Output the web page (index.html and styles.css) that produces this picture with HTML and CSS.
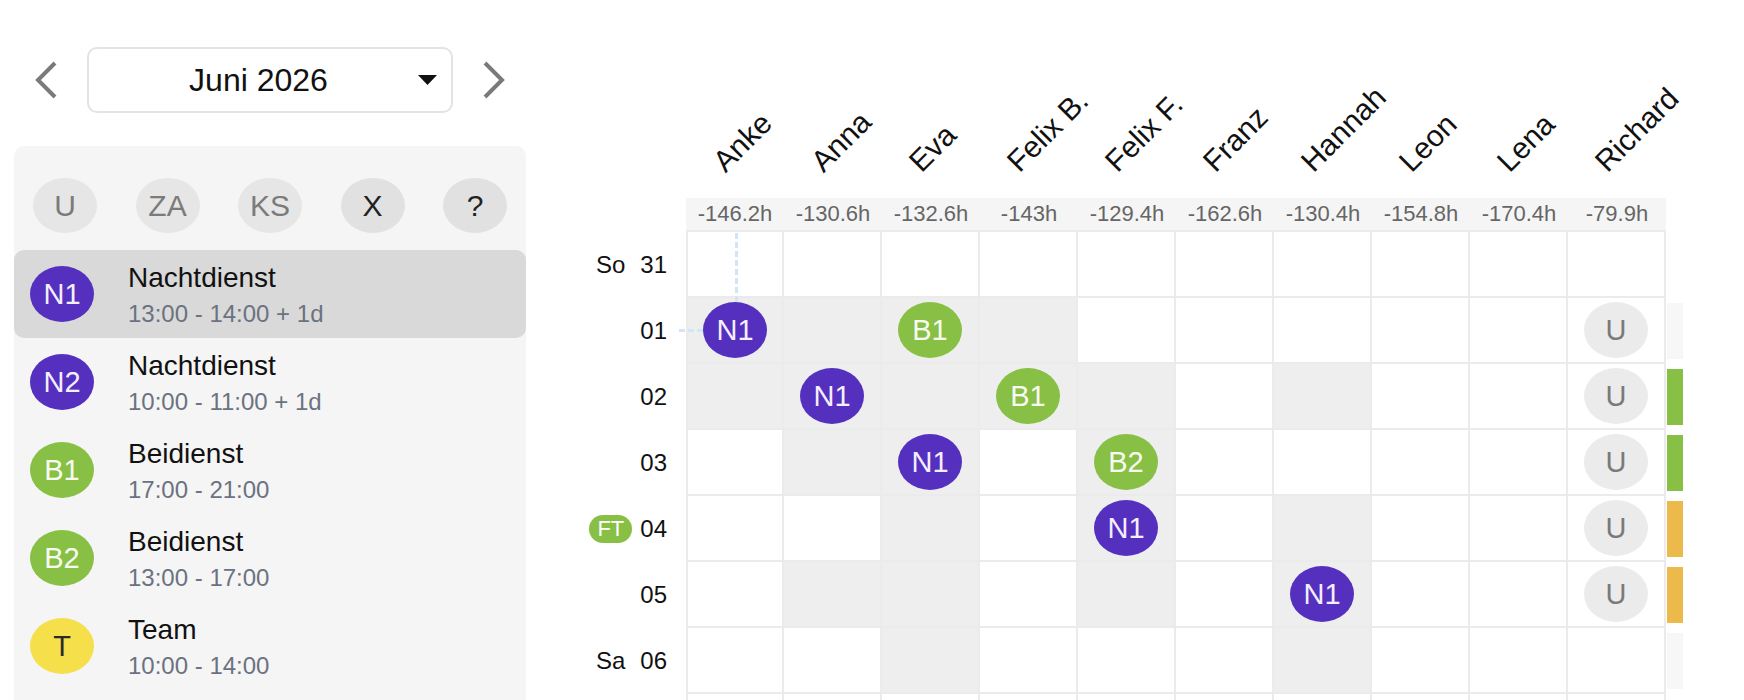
FILE: index.html
```html
<!DOCTYPE html>
<html>
<head>
    <meta charset="utf-8">
    <title>Dienstplan Juni 2026</title>
    <link rel="stylesheet" href="styles.css">
</head>
<body>
<div class="app">

<!-- left column: month switch and shift palette -->
<div class="sidebar">
    <div class="month-nav">
        <span class="nav-arrow"><svg width="22" height="38" viewBox="0 0 22 38"><path d="M20 2 L3 19 L20 36"/></svg></span>
        <div class="month-select">
            <span class="month-label">Juni 2026</span>
            <svg class="caret" width="19" height="10" viewBox="0 0 19 10"><path d="M0 0 H19 L9.5 10 Z"/></svg>
        </div>
        <span class="nav-arrow"><svg width="22" height="38" viewBox="0 0 22 38"><path d="M2 2 L19 19 L2 36"/></svg></span>
    </div>

    <div class="panel">
        <div class="filters">
            <span class="filter">U</span>
            <span class="filter">ZA</span>
            <span class="filter">KS</span>
            <span class="filter on">X</span>
            <span class="filter on">?</span>
        </div>

        <div class="shift selected">
            <span class="badge n">N1</span>
            <div class="shift-text">
                <div class="shift-name">Nachtdienst</div>
                <div class="shift-time">13:00 - 14:00 + 1d</div>
            </div>
        </div>
        <div class="shift">
            <span class="badge n">N2</span>
            <div class="shift-text">
                <div class="shift-name">Nachtdienst</div>
                <div class="shift-time">10:00 - 11:00 + 1d</div>
            </div>
        </div>
        <div class="shift">
            <span class="badge b">B1</span>
            <div class="shift-text">
                <div class="shift-name">Beidienst</div>
                <div class="shift-time">17:00 - 21:00</div>
            </div>
        </div>
        <div class="shift">
            <span class="badge b">B2</span>
            <div class="shift-text">
                <div class="shift-name">Beidienst</div>
                <div class="shift-time">13:00 - 17:00</div>
            </div>
        </div>
        <div class="shift">
            <span class="badge t">T</span>
            <div class="shift-text">
                <div class="shift-name">Team</div>
                <div class="shift-time">10:00 - 14:00</div>
            </div>
        </div>
    </div>
</div>

<!-- right column: the plan itself -->
<div class="plan">
    <div class="names">
        <div class="name"><span>Anke</span></div>
        <div class="name"><span>Anna</span></div>
        <div class="name"><span>Eva</span></div>
        <div class="name"><span>Felix B.</span></div>
        <div class="name"><span>Felix F.</span></div>
        <div class="name"><span>Franz</span></div>
        <div class="name"><span>Hannah</span></div>
        <div class="name"><span>Leon</span></div>
        <div class="name"><span>Lena</span></div>
        <div class="name"><span>Richard</span></div>
    </div>

    <div class="hours">
        <div>-146.2h</div>
        <div>-130.6h</div>
        <div>-132.6h</div>
        <div>-143h</div>
        <div>-129.4h</div>
        <div>-162.6h</div>
        <div>-130.4h</div>
        <div>-154.8h</div>
        <div>-170.4h</div>
        <div>-79.9h</div>
    </div>

    <div class="day">
        <div class="date"><span class="wd">So</span>31</div>
        <div class="cell"></div>
        <div class="cell"></div>
        <div class="cell"></div>
        <div class="cell"></div>
        <div class="cell"></div>
        <div class="cell"></div>
        <div class="cell"></div>
        <div class="cell"></div>
        <div class="cell"></div>
        <div class="cell"></div>
        <div class="mark"></div>
    </div>

    <div class="day">
        <div class="date">01</div>
        <div class="cell off"><span class="badge n hl">N1</span></div>
        <div class="cell off"></div>
        <div class="cell off"><span class="badge b">B1</span></div>
        <div class="cell off"></div>
        <div class="cell"></div>
        <div class="cell"></div>
        <div class="cell"></div>
        <div class="cell"></div>
        <div class="cell"></div>
        <div class="cell"><span class="badge u">U</span></div>
        <div class="mark light"></div>
    </div>

    <div class="day">
        <div class="date">02</div>
        <div class="cell off"></div>
        <div class="cell off"><span class="badge n">N1</span></div>
        <div class="cell off"></div>
        <div class="cell off"><span class="badge b">B1</span></div>
        <div class="cell off"></div>
        <div class="cell"></div>
        <div class="cell off"></div>
        <div class="cell"></div>
        <div class="cell"></div>
        <div class="cell"><span class="badge u">U</span></div>
        <div class="mark green"></div>
    </div>

    <div class="day">
        <div class="date">03</div>
        <div class="cell"></div>
        <div class="cell off"></div>
        <div class="cell off"><span class="badge n">N1</span></div>
        <div class="cell"></div>
        <div class="cell off"><span class="badge b">B2</span></div>
        <div class="cell"></div>
        <div class="cell"></div>
        <div class="cell"></div>
        <div class="cell"></div>
        <div class="cell"><span class="badge u">U</span></div>
        <div class="mark green"></div>
    </div>

    <div class="day">
        <div class="date"><span class="ft">FT</span>04</div>
        <div class="cell"></div>
        <div class="cell"></div>
        <div class="cell off"></div>
        <div class="cell"></div>
        <div class="cell off"><span class="badge n">N1</span></div>
        <div class="cell"></div>
        <div class="cell off"></div>
        <div class="cell"></div>
        <div class="cell"></div>
        <div class="cell"><span class="badge u">U</span></div>
        <div class="mark orange"></div>
    </div>

    <div class="day">
        <div class="date">05</div>
        <div class="cell"></div>
        <div class="cell off"></div>
        <div class="cell off"></div>
        <div class="cell"></div>
        <div class="cell off"></div>
        <div class="cell"></div>
        <div class="cell off"><span class="badge n">N1</span></div>
        <div class="cell"></div>
        <div class="cell"></div>
        <div class="cell"><span class="badge u">U</span></div>
        <div class="mark orange"></div>
    </div>

    <div class="day">
        <div class="date"><span class="wd">Sa</span>06</div>
        <div class="cell"></div>
        <div class="cell"></div>
        <div class="cell off"></div>
        <div class="cell"></div>
        <div class="cell"></div>
        <div class="cell"></div>
        <div class="cell off"></div>
        <div class="cell"></div>
        <div class="cell"></div>
        <div class="cell"></div>
        <div class="mark light"></div>
    </div>

    <div class="day">
        <div class="date"></div>
        <div class="cell"></div>
        <div class="cell"></div>
        <div class="cell"></div>
        <div class="cell"></div>
        <div class="cell"></div>
        <div class="cell"></div>
        <div class="cell"></div>
        <div class="cell"></div>
        <div class="cell"></div>
        <div class="cell"></div>
        <div class="mark"></div>
    </div>
</div>

</div>
</body>
</html>
```

FILE: styles.css
```css
BODY {
    margin : 0;
    font-family : "Liberation Sans", Arial, Helvetica, sans-serif;
    color : #111;
    background : #fff;
}
.app {
    display : flex;
    align-items : flex-start;
}

/* sidebar */
.sidebar {
    width : 512px;
    margin-left : 14px;
    flex : none;
}
.month-nav {
    display : flex;
    align-items : center;
    justify-content : space-between;
    padding : 0 21px;
    margin-top : 47px;
    height : 66px;
}
.nav-arrow svg {
    display : block;
}
.nav-arrow path {
    fill : none;
    stroke : #7a7a7a;
    stroke-width : 4;
}
.month-select {
    box-sizing : border-box;
    width : 366px;
    height : 66px;
    border : 2px solid #e3e3e3;
    border-radius : 10px;
    display : flex;
    align-items : center;
    padding-right : 14px;
}
.month-label {
    flex : 1;
    text-align : center;
    font-size : 32px;
    margin-right : -10px;
}
.caret path {
    fill : #111;
}

.panel {
    margin-top : 33px;
    background : #f5f5f5;
    border-radius : 10px;
    padding-bottom : 40px;
}
.filters {
    display : flex;
    justify-content : space-between;
    padding : 32px 19px 0;
    margin-bottom : 17px;
}
.filter {
    width : 64px;
    height : 55px;
    border-radius : 50%;
    background : #e6e6e6;
    color : #7b7b7b;
    font-size : 30px;
    display : flex;
    align-items : center;
    justify-content : center;
}
.filter.on {
    background : #e1e1e1;
    color : #222;
}
.shift {
    display : flex;
    align-items : center;
    height : 88px;
    padding-left : 16px;
    border-radius : 10px;
}
.shift.selected {
    background : #d9d9d9;
}
.shift .badge {
    margin-right : 34px;
}
.shift-text {
    padding-top : 4px;
}
.shift-name {
    font-size : 28px;
    line-height : 36px;
}
.shift-time {
    font-size : 24px;
    line-height : 36px;
    color : #6b7280;
}

/* shift badges */
.badge {
    width : 64px;
    height : 56px;
    border-radius : 50%;
    display : flex;
    align-items : center;
    justify-content : center;
    font-size : 29px;
    flex : none;
}
.badge.n {
    background : #5530be;
    color : #f3efff;
}
.badge.b {
    background : #88bf45;
    color : #f8fbf2;
}
.badge.t {
    background : #f5df4a;
    color : #2a2a2a;
}
.badge.u {
    background : #ebebeb;
    color : #7a7a7a;
}

/* hover cross lines */
.badge.hl {
    position : relative;
}
.badge.hl::before {
    content : "";
    position : absolute;
    left : 32px;
    bottom : 100%;
    width : 3px;
    height : 70px;
    background : repeating-linear-gradient(to top, #d2e5f6 0 6px, transparent 6px 9px);
}
.badge.hl::after {
    content : "";
    position : absolute;
    right : 100%;
    top : 27px;
    width : 25px;
    height : 3px;
    background : repeating-linear-gradient(to left, #d2e5f6 0 6px, transparent 6px 9px);
}

/* plan */
.plan {
    margin-left : 34px;
    flex : none;
}
.names {
    display : flex;
    align-items : flex-end;
    height : 198px;
    padding-left : 126px;
}
.name {
    width : 98px;
    flex : none;
    box-sizing : border-box;
    padding : 0 0 21px 43px;
}
.name span {
    display : inline-block;
    white-space : nowrap;
    font-size : 30px;
    line-height : 30px;
    transform-origin : left bottom;
    transform : rotate(-45deg);
}
.hours {
    display : flex;
    width : 980px;
    margin-left : 126px;
    background : #f5f5f5;
    border-bottom : 2px solid #ebebeb;
}
.hours DIV {
    width : 98px;
    text-align : center;
    font-size : 22px;
    line-height : 32px;
    color : #666;
}
.day {
    display : flex;
    height : 66px;
}
.date {
    width : 126px;
    box-sizing : border-box;
    padding-right : 19px;
    display : flex;
    align-items : center;
    justify-content : flex-end;
    font-size : 24px;
}
.date .wd {
    margin-right : 15px;
}
.ft {
    background : #88bf45;
    color : #fff;
    font-size : 22px;
    line-height : 28px;
    height : 28px;
    padding : 0 8px;
    border-radius : 14px;
    margin-right : 8px;
}
.cell {
    width : 98px;
    box-sizing : border-box;
    border-right : 2px solid #ebebeb;
    border-bottom : 2px solid #ebebeb;
    display : flex;
    align-items : center;
    justify-content : center;
}
.day .cell:nth-child(2) {
    border-left : 2px solid #ebebeb;
}
.cell.off {
    background : #eeeeee;
}
.mark {
    width : 16px;
    height : 56px;
    margin-left : 1px;
    align-self : center;
}
.mark.light {
    background : #f7f7f7;
}
.mark.green {
    background : #88bf45;
}
.mark.orange {
    background : #ecba4b;
}
```
